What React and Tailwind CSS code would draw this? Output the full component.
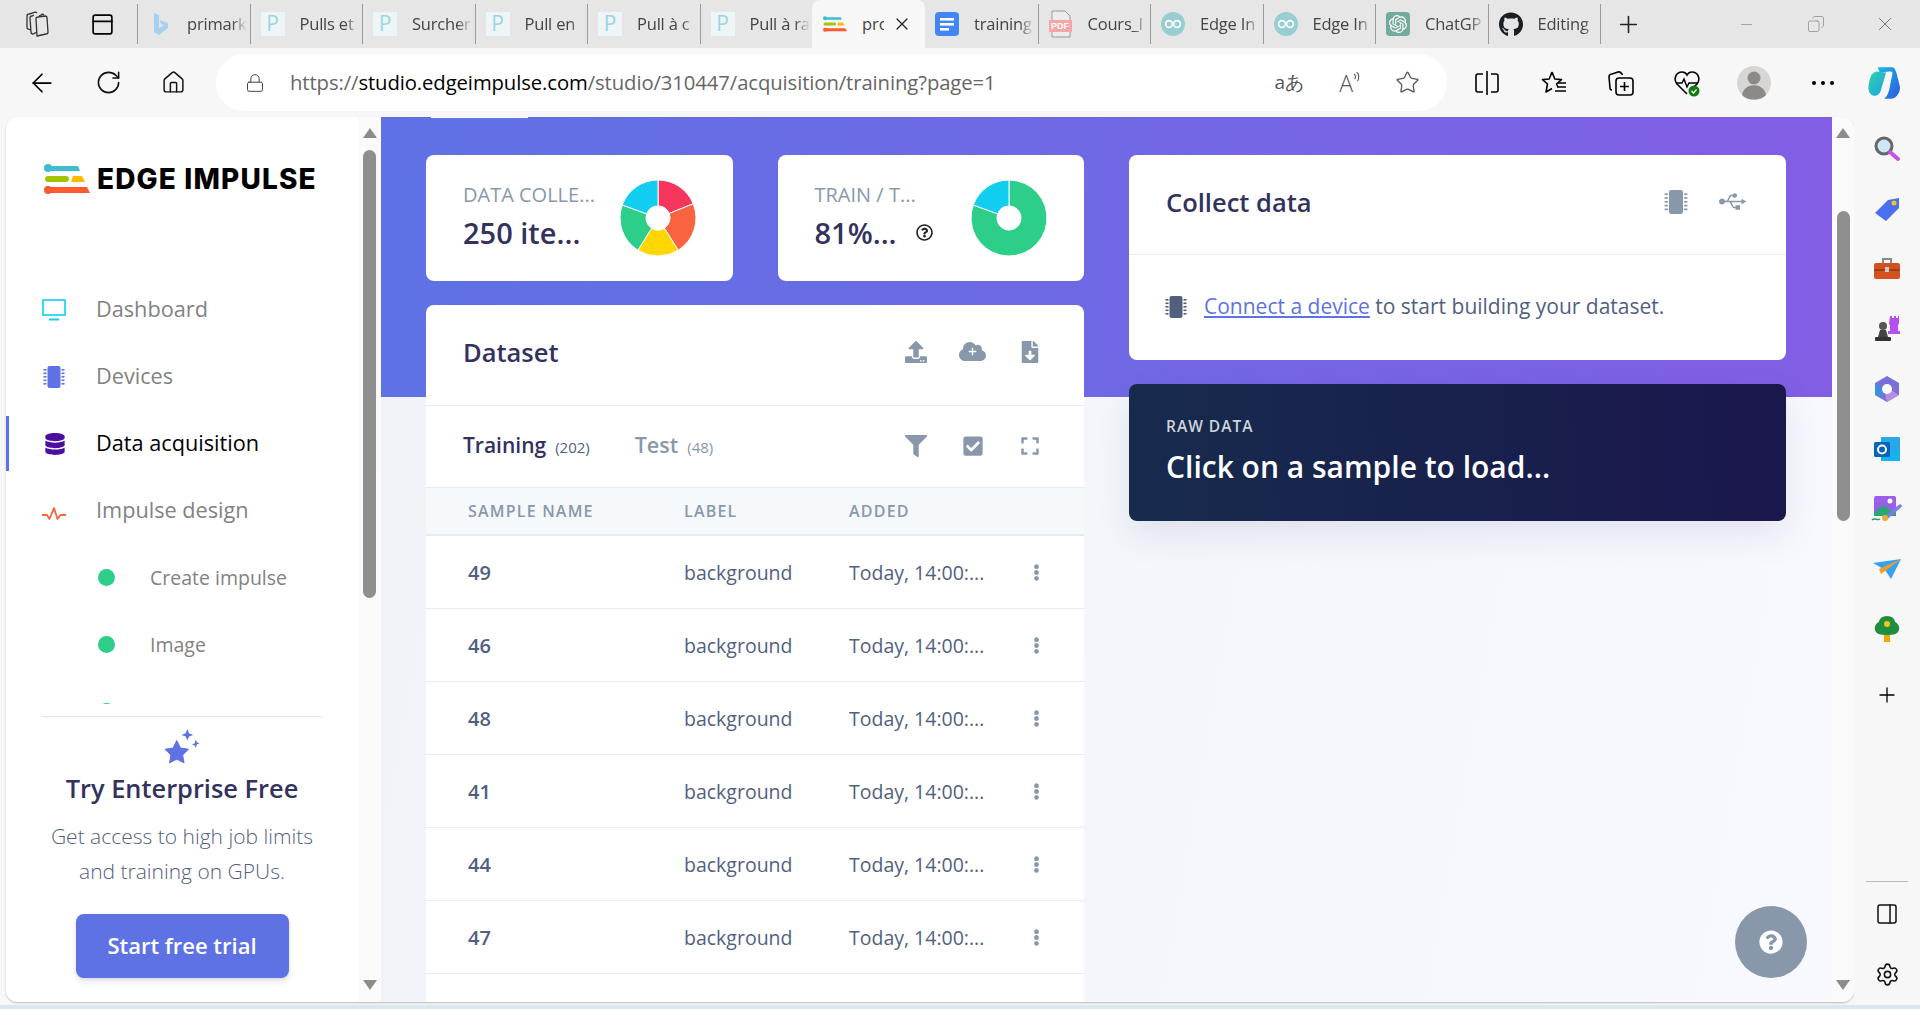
import React from "react";
import { ArrowLeft, RotateCw, Home, Lock, Star, Plus, X, Minus, Copy, PanelRight, Settings, PanelTop } from "lucide-react";
import {
  FaGithub, FaUpload, FaFileDownload, FaFilter, FaCheckSquare, FaExpand, FaUsb,
  FaEllipsisV, FaQuestionCircle, FaDatabase, FaRegQuestionCircle, FaCloud,
} from "react-icons/fa";
import { SiOpenai } from "react-icons/si";

const SANS = "font-['Open_Sans',sans-serif]";

const Logo = ({ className = "" }) => (
  <svg viewBox="0 0 46 30" className={className}>
    <circle cx="4" cy="4" r="4" fill="#3ebcd0" />
    <path d="M4 2h30l2 5H4z" fill="#3ebcd0" />
    <rect x="1" y="12" width="24" height="6" rx="3" fill="#a4c400" />
    <path d="M29 12h9l3 6H27z" fill="#ffb900" />
    <circle cx="4" cy="26" r="4" fill="#ff5a30" />
    <path d="M4 23h39l3 6H4z" fill="#ff5a30" />
  </svg>
);

const Chip = ({ className = "", body = "#5e72e4", pins = "#5e72e4" }) => (
  <svg viewBox="0 0 24 24" className={className}>
    <rect x="5.5" y="1" width="13" height="22" rx="2" fill={body} />
    {[4, 7.5, 11, 14.5, 18].map((y) => (
      <g key={y}>
        <rect x="1.5" y={y} width="3" height="1.6" fill={pins} />
        <rect x="19.5" y={y} width="3" height="1.6" fill={pins} />
      </g>
    ))}
  </svg>
);

const PFavicon = () => (
  <div className={`w-6 h-6 bg-[#eef5f6] flex items-center justify-center text-[21px] text-[#9bd5e0] ${SANS}`}>P</div>
);

const EdgeFavicon = () => (
  <svg viewBox="0 0 24 24" className="w-6 h-6">
    <circle cx="12" cy="12" r="12" fill="#98ced2" />
    <circle cx="8" cy="12" r="3.4" fill="none" stroke="#fff" strokeWidth="1.6" />
    <circle cx="16" cy="12" r="3.4" fill="none" stroke="#fff" strokeWidth="1.6" />
  </svg>
);

const BingIcon = () => (
  <svg viewBox="0 0 24 24" className="w-6 h-6">
    <path d="M6 1l5 2v13l5-3-3-1-1.5-4L20 11v5l-9 7-5-3z" fill="#a9d0f0" />
  </svg>
);

const DocsIcon = () => (
  <svg viewBox="0 0 24 24" className="w-6 h-6">
    <rect width="24" height="24" rx="4" fill="#4285f4" />
    <rect x="5" y="6" width="14" height="2.6" fill="#fff" />
    <rect x="5" y="11" width="14" height="2.6" fill="#fff" />
    <rect x="5" y="16" width="9" height="2.6" fill="#fff" />
  </svg>
);

const PdfIcon = () => (
  <div className="relative w-6 h-7">
    <svg viewBox="0 0 24 28" className="w-6 h-7">
      <path d="M3 1h13l5 5v21H3z" fill="#ececec" stroke="#999" />
    </svg>
    <span className="absolute left-0 bottom-[6px] w-[23px] bg-[#f5a5a5] text-white text-[9px] font-bold text-center leading-[12px] font-['Liberation_Sans',sans-serif]">PDF</span>
  </div>
);

const GptIcon = () => (
  <div className="w-6 h-6 rounded-sm bg-[#74aa9c] flex items-center justify-center text-white">
    <SiOpenai size={18} />
  </div>
);

const tabs = [
  { title: "primark", icon: <BingIcon /> },
  { title: "Pulls et", icon: <PFavicon /> },
  { title: "Surcher", icon: <PFavicon /> },
  { title: "Pull en", icon: <PFavicon /> },
  { title: "Pull à c", icon: <PFavicon /> },
  { title: "Pull à ra", icon: <PFavicon /> },
  { title: "pro", icon: <Logo className="w-6 h-[18px]" />, active: true },
  { title: "training", icon: <DocsIcon /> },
  { title: "Cours_I", icon: <PdfIcon /> },
  { title: "Edge In", icon: <EdgeFavicon /> },
  { title: "Edge In", icon: <EdgeFavicon /> },
  { title: "ChatGP", icon: <GptIcon /> },
  { title: "Editing", icon: <FaGithub size={25} className="text-[#1b1f23]" /> },
];

const TabBar = () => (
  <div className="h-12 bg-[#e6e6e6] flex items-center shrink-0">
    <div className="w-[137px] h-full flex items-center">
      <svg viewBox="0 0 26 28" className="ml-[25px] w-[26px] h-7" fill="none" stroke="#333" strokeWidth="1.3">
        <path d="M12 26l9-2c1 0 2-1 2-2l-1-14c0-1-1-2-2-2l-7 1c-1 0-2 1-2 2z" />
        <path d="M12 22L8 24c-1 0-2-1-2-2L5 8c0-1 1-2 2-2l2-1M14 6l2-1c1-1 2-1 3 0" />
        <path d="M6 20l-3-1c-1 0-1-1-1-2L2 6c0-1 1-2 2-2l4-1c1-1 3-1 4 0" />
      </svg>
      <PanelTop size={25} strokeWidth={1.6} className="ml-[39px] text-black" />
    </div>
    {tabs.map((tab, i) =>
      tab.active ? (
        <div key={i} className="w-[113px] h-full bg-[#f7f7f7] rounded-t-lg flex items-center pl-[11px]">
          <div className="w-6 shrink-0 flex justify-center">{tab.icon}</div>
          <span className={`ml-[15px] w-[22px] overflow-hidden whitespace-nowrap text-[16.5px] text-[#444] ${SANS}`}>{tab.title}</span>
          <X size={20} strokeWidth={1.5} className="ml-[8px] text-[#222]" />
        </div>
      ) : (
        <div
          key={i}
          className={`w-[112.5px] h-10 flex items-center pl-[10px] border-l border-[#9a9a9a] ${tabs[i - 1]?.active ? "border-l-0" : ""}`}
        >
          <div className="w-6 shrink-0 flex justify-center">{tab.icon}</div>
          <span className={`ml-[15px] w-[60px] overflow-hidden whitespace-nowrap text-[16.5px] tracking-[-0.2px] text-[#444] [mask-image:linear-gradient(90deg,#000_75%,transparent)] ${SANS}`}>{tab.title}</span>
        </div>
      )
    )}
    <div className="h-10 border-l border-[#9a9a9a]" />
    <Plus size={27} strokeWidth={1.4} className="ml-[14px] text-[#222]" />
    <Minus size={17} strokeWidth={1} className="ml-[96px] text-[#888]" />
    <Copy size={18} strokeWidth={1} className="ml-[52px] text-[#888] -scale-x-100" />
    <X size={22} strokeWidth={1} className="ml-[49px] text-[#666]" />
  </div>
);

const SplitIcon = () => (
  <svg viewBox="0 0 26 26" className="ml-[27px] w-[26px] h-[26px]" fill="none" stroke="#000" strokeWidth="1.6">
    <path d="M9 4H4c-1 0-2 1-2 2v14c0 1 1 2 2 2h5M17 4h5c1 0 2 1 2 2v14c0 1-1 2-2 2h-5M13 1v24" />
  </svg>
);

const FavoritesIcon = () => (
  <svg viewBox="0 0 28 28" className="ml-[40px] w-7 h-7" fill="none" stroke="#000" strokeWidth="1.6" strokeLinejoin="round">
    <path d="M12 3l2.800 7 6.700.6-5 4.400 1.500 3M12 3L9.200 10l-6.700.6 5 4.400L6 23l6-3.500" />
    <path d="M17 18h9M15 22h11M18 14h8" />
  </svg>
);

const CollectionsIcon = () => (
  <svg viewBox="0 0 28 28" className="ml-[39px] w-7 h-7" fill="none" stroke="#000" strokeWidth="1.6" strokeLinejoin="round">
    <rect x="9" y="9" width="17" height="17" rx="3" />
    <path d="M17.500 13v9M13 17.500h9" />
    <path d="M5 21c-1.500 0-2-1-2-2L2 8c0-2 1-3 3-3l6-2c2-.5 3 .5 4 2l.5 1" />
  </svg>
);

const HealthIcon = () => (
  <svg viewBox="0 0 28 28" className="ml-[38px] w-7 h-7" fill="none">
    <path d="M14 25L4 15C0 10 3 3 9 3c2 0 4 1 5 3 1-2 3-3 5-3 6 0 9 7 5 12l-3 3" stroke="#000" strokeWidth="1.6" />
    <path d="M3 14h6l2-4 3 8 2-4h8" stroke="#000" strokeWidth="1.5" />
    <circle cx="21" cy="22" r="5.500" fill="#107c10" />
    <path d="M18.500 22l2 2 3-3.500" stroke="#fff" strokeWidth="1.300" />
  </svg>
);

const ToolBar = () => (
  <div className="h-[69px] bg-[#f7f7f7] flex items-center shrink-0">
    <ArrowLeft size={30} strokeWidth={1.4} className="ml-[27px] text-black" />
    <RotateCw size={27} strokeWidth={1.4} className="ml-[38px] text-[#111]" />
    <Home size={25} strokeWidth={1.4} className="ml-[39px] text-[#111]" />
    <div className="ml-[30px] w-[1231px] h-[57px] bg-white rounded-full flex items-center">
      <Lock size={20} strokeWidth={1.2} className="ml-[29px] text-[#444]" />
      <div className={`ml-[25px] text-[20.3px] tracking-[-0.1px] text-[#666] ${SANS}`}>
        https://<span className="text-black">studio.edgeimpulse.com</span>/studio/310447/acquisition/training?page=1
      </div>
      <span className={`ml-auto text-[19px] text-[#555] ${SANS}`}>aあ</span>
      <span className={`ml-[35px] flex items-start text-[#555] text-[23px] leading-[30px] font-light ${SANS}`}>
        A
        <svg viewBox="0 0 10 16" className="w-[9px] h-[15px] mt-[2px]" fill="none" stroke="#555" strokeWidth="1.2">
          <path d="M1 4c2 1 2 4 1 6M4 2c3 2 3 7 1 10" />
        </svg>
      </span>
      <Star size={25} strokeWidth={1.2} className="ml-[33px] mr-[27px] text-[#555]" />
    </div>
    <SplitIcon />
    <FavoritesIcon />
    <CollectionsIcon />
    <HealthIcon />
    <svg viewBox="0 0 34 34" className="ml-[36px] w-[34px] h-[34px]">
      <circle cx="17" cy="17" r="17" fill="#d8d6d4" />
      <circle cx="17" cy="12" r="6.5" fill="#8d8986" />
      <path d="M5 29c2-13 22-13 24 0-5 6-19 6-24 0z" fill="#8d8986" />
    </svg>
    <div className="ml-[41px] w-[22px] flex justify-between">
      <span className="w-[4px] h-[4px] rounded-full bg-black" />
      <span className="w-[4px] h-[4px] rounded-full bg-black" />
      <span className="w-[4px] h-[4px] rounded-full bg-black" />
    </div>
    <svg viewBox="0 0 36 36" className="ml-[31px] w-[38px] h-[38px]">
      <defs>
        <linearGradient id="cop1" x1="0" y1="0" x2="1" y2="1">
          <stop offset="0" stopColor="#1fb6e8" />
          <stop offset="1" stopColor="#2a5be0" />
        </linearGradient>
        <linearGradient id="cop2" x1="0" y1="0" x2="1" y2="1">
          <stop offset="0" stopColor="#2fd4a8" />
          <stop offset="1" stopColor="#1fa0e8" />
        </linearGradient>
      </defs>
      <path d="M12 3h14c2 0 3 3 4 6l3 12c1 5-3 12-9 12h-6c3-2 4-5 5-9L26 9c0-2-1-2-3-2L14 8z" fill="url(#cop1)" />
      <path d="M4 17c1-6 3-9 7-10l9 1-5 17c-1 3-3 5-6 5-5 0-7-6-5-13z" fill="url(#cop2)" />
    </svg>
  </div>
);

const ScrollBar = ({ gap, thumb }) => (
  <div className="w-full h-full bg-[#fafafa] flex flex-col items-center pt-[11px]">
    <div className="w-0 h-0 border-x-[7.5px] border-x-transparent border-b-[10px] border-b-[#8c8c8c]" />
    <div className={`w-[13px] rounded-full bg-[#8f8f8f] ${gap} ${thumb}`} />
    <div className="mt-auto mb-[12px] w-0 h-0 border-x-[7.5px] border-x-transparent border-t-[10px] border-t-[#8c8c8c]" />
  </div>
);

const NavItem = ({ icon, label, active }) => (
  <div className="relative h-[67px] flex items-center">
    {active && <div className="absolute left-0 top-[6px] h-[55px] w-[3px] bg-[#5e72e4]" />}
    <div className="w-[91px] pl-[36px] flex">{icon}</div>
    <span className={`-ml-[1px] text-[21.7px] ${active ? "text-black" : "text-[#828282]"}`}>{label}</span>
  </div>
);

const SubItem = ({ label }) => (
  <div className="h-[67px] flex items-center pl-[92px]">
    <div className="w-[17px] h-[17px] rounded-full bg-[#2dce89]" />
    <span className="ml-[35px] text-[19.5px] text-[#828282]">{label}</span>
  </div>
);

const TvIcon = () => (
  <svg viewBox="0 0 24 24" className="w-6 h-6" fill="none" stroke="#11cdef" strokeWidth="1.6">
    <rect x="1" y="2" width="22" height="15" />
    <path d="M7 21.500h10" strokeWidth="2" />
  </svg>
);

const PulseIcon = () => (
  <svg viewBox="0 0 24 16" className="w-6 h-4 mt-[6px]" fill="none" stroke="#fb6340" strokeWidth="1.8" strokeLinejoin="round">
    <path d="M0 9h5l2.500 4L12 2l3.500 11 3-4H24" />
  </svg>
);

const Sidebar = () => (
  <aside className={`w-[352px] h-full bg-white flex flex-col ${SANS}`}>
    <div className="h-[158px] shrink-0 flex items-start pl-[38px] pt-[47px]">
      <Logo className="w-[46px] h-[30px]" />
      <span className="ml-[7px] -mt-[3px] text-[28px] leading-[36px] font-extrabold tracking-[1.15px] text-black font-['Inter',sans-serif]">EDGE IMPULSE</span>
    </div>
    <div className="h-[429px] shrink-0 overflow-hidden pt-[1px]">
      <NavItem label="Dashboard" icon={<TvIcon />} />
      <NavItem label="Devices" icon={<Chip className="w-6 h-6" />} />
      <NavItem label="Data acquisition" active icon={<FaDatabase size={22} className="text-[#4b0ea0] ml-[2px]" />} />
      <NavItem label="Impulse design" icon={<PulseIcon />} />
      <SubItem label="Create impulse" />
      <SubItem label="Image" />
      <SubItem label="Transfer learning" />
    </div>
    <div className="mx-[36px] mt-[12px] w-[280px] border-t border-[#e4e4e4] flex flex-col items-center">
      <svg viewBox="0 0 36 36" className="mt-[12px] w-[38px] h-[38px] -ml-[2px]" fill="#5e72e4">
        <path d="M14 11l3.400 7 7.600 1.100-5.500 5.300 1.300 7.600-6.800-3.600-6.800 3.600 1.300-7.600L3 19.100l7.600-1.100z" strokeLinejoin="round" stroke="#5e72e4" />
        <path d="M24 0l1.600 4 4 1.600-4 1.600L24 11l-1.600-3.800-4-1.600 4-1.600zM32 10l1 2.600 2.600 1-2.600 1L32 18l-1-2.400-2.600-1 2.600-1z" />
      </svg>
      <h3 className="mt-[3px] text-[25.4px] leading-[36px] font-semibold text-[#32325d] whitespace-nowrap">Try Enterprise Free</h3>
      <p className="mt-[13px] text-center text-[21px] leading-[35px] font-light text-[#525f7f] whitespace-nowrap">
        Get access to high job limits<br />and training on GPUs.
      </p>
      <button className="mt-[25px] w-[213px] h-[64px] pb-[2px] rounded-lg bg-[#5e72e4] text-white text-[22px] font-semibold shadow-[0_4px_6px_rgba(50,50,93,0.11),0_1px_3px_rgba(0,0,0,0.08)]">
        Start free trial
      </button>
    </div>
  </aside>
);

const polar = (r, deg) => {
  const a = ((deg - 90) * Math.PI) / 180;
  return [40 + r * Math.cos(a), 40 + r * Math.sin(a)];
};

const Pie = ({ slices }) => (
  <svg viewBox="0 0 80 80" className="w-20 h-20 shrink-0">
    {slices.map(([from, to, color]) => {
      const [x1, y1] = polar(38, from);
      const [x2, y2] = polar(38, to);
      const [x3, y3] = polar(12, to);
      const [x4, y4] = polar(12, from);
      const large = to - from > 180 ? 1 : 0;
      return (
        <path
          key={from}
          d={`M${x1} ${y1}A38 38 0 ${large} 1 ${x2} ${y2}L${x3} ${y3}A12 12 0 ${large} 0 ${x4} ${y4}Z`}
          fill={color}
          stroke="#fff"
          strokeWidth="1"
        />
      );
    })}
  </svg>
);

const StatCard = ({ label, value, slices, help }) => (
  <div className="h-[126px] bg-white rounded-lg flex items-center pl-[37px] pr-[35px]">
    <div className="flex-1 pb-[3px]">
      <div className="text-[20px] leading-[28px] text-[#8898aa] whitespace-nowrap">{label}</div>
      <div className="flex items-center mt-[4px]">
        <span className="text-[29px] leading-[40px] font-semibold text-[#32325d] whitespace-nowrap">{value}</span>
        {help && <FaRegQuestionCircle size={17} className="ml-[19px] text-[#222]" />}
      </div>
    </div>
    <Pie slices={slices} />
  </div>
);

const Card = ({ className = "", children }) => (
  <div className={`bg-white rounded-lg ${className}`}>{children}</div>
);

const rows = ["49", "46", "48", "41", "44", "47", "45"];

const SampleRow = ({ name }) => (
  <div className="h-[73px] shrink-0 flex items-center border-t border-[#e9ecef] first:border-t-0 text-[19.5px] text-[#525f7f]">
    <span className="w-[258px] pl-[42px] pt-[1px] text-[20px] font-semibold">{name}</span>
    <span className="w-[165px] pt-[1px]">background</span>
    <span className="w-[179px] pt-[1px] whitespace-nowrap">Today, 14:00:...</span>
    <FaEllipsisV size={17} className="text-[#8898aa]" />
  </div>
);

const IconGroup = ({ icons }) => (
  <div className="ml-auto flex items-center">
    {icons.map((icon, i) => (
      <div key={i} className="w-[57px] flex justify-center text-[#8898aa]">{icon}</div>
    ))}
  </div>
);

const Dataset = () => (
  <Card className="mt-[24px] flex-1 flex flex-col overflow-hidden rounded-b-none">
    <div className="h-[101px] shrink-0 flex items-center pl-[37px] pr-[26px] pb-[6px] border-b border-[#e9ecef]">
      <h3 className="text-[25.5px] font-semibold text-[#32325d]">Dataset</h3>
      <IconGroup
        icons={[
          <FaUpload size={22} key="u" />,
          <div key="c" className="relative -mt-[2px]">
            <FaCloud size={27} />
            <Plus size={11} strokeWidth={3} className="absolute left-[8px] top-[8px] text-white" />
          </div>,
          <FaFileDownload size={22} key="f" />,
        ]}
      />
    </div>
    <div className="h-[81px] shrink-0 flex items-center pl-[37px] pr-[26px] pb-[2px]">
      <span className="text-[21px] font-semibold text-[#32325d]">Training</span>
      <span className="ml-[9px] mt-[3px] text-[15px] text-[#525f7f]">(202)</span>
      <span className="ml-[45px] text-[21.5px] font-semibold text-[#8898aa]">Test</span>
      <span className="ml-[9px] mt-[3px] text-[15px] text-[#8898aa]">(48)</span>
      <IconGroup
        icons={[
          <FaFilter size={22} key="f" />,
          <FaCheckSquare size={22} key="c" />,
          <FaExpand size={20} key="e" />,
        ]}
      />
    </div>
    <div className="h-[48px] shrink-0 flex items-center bg-[#f6f9fc] border-y border-[#e9ecef] text-[16px] font-semibold tracking-[1.2px] text-[#8898aa]">
      <span className="w-[258px] pl-[42px]">SAMPLE NAME</span>
      <span className="w-[165px]">LABEL</span>
      <span>ADDED</span>
    </div>
    {rows.map((r) => <SampleRow key={r} name={r} />)}
  </Card>
);

const RightColumn = () => (
  <div className="flex flex-col">
    <Card className="h-[205px]">
      <div className="h-[100px] flex items-center pl-[37px] pr-[24px] border-b border-[#eeeff2]">
        <h3 className="text-[25.5px] font-semibold text-[#32325d] -mt-[4px]">Collect data</h3>
        <IconGroup
          icons={[
            <Chip key="c" className="w-[26px] h-7 -mt-[6px] -ml-[2px]" body="#8898aa" pins="#8898aa" />,
            <FaUsb key="u" size={27} className="-mt-[6px] -ml-[2px]" />,
          ]}
        />
      </div>
      <div className="h-[105px] flex items-center pl-[35px] pb-[2px]">
        <Chip className="w-6 h-6" body="#525f7f" pins="#525f7f" />
        <p className="ml-[16px] mt-[1px] text-[21px] text-[#525f7f]">
          <span className="text-[#5e72e4] underline underline-offset-2">Connect a device</span> to start building your dataset.
        </p>
      </div>
    </Card>
    <div className="mt-[24px] h-[137px] rounded-lg bg-[linear-gradient(87deg,#172b4d,#1a174d)] pl-[37px] pt-[30px] shadow-[0_15px_35px_rgba(50,50,93,0.1)]">
      <div className="text-[15.5px] leading-[24px] font-semibold tracking-[1px] text-[#ced4da]">RAW DATA</div>
      <div className="mt-[7px] text-[30px] leading-[44px] font-semibold text-white whitespace-nowrap">Click on a sample to load...</div>
    </div>
  </div>
);

const MainArea = () => (
  <main className={`relative flex-1 h-full overflow-hidden bg-[linear-gradient(100deg,#f1f3f9,#f8f9ff)] ${SANS}`}>
    <div className="absolute inset-x-0 top-0 h-[280px] bg-[linear-gradient(87deg,#5e72e4,#825ee4)]" />
    <div className="absolute left-[50px] top-0 w-[97px] h-[1px] bg-white" />
    <div className="relative h-full pl-[45px] pt-[38px] grid grid-cols-[658px_657px] gap-x-[45px]">
      <div className="flex flex-col min-h-0">
        <div className="grid grid-cols-2 gap-x-[45px] shrink-0">
          <StatCard
            label="DATA COLLE..."
            value="250 ite..."
            slices={[
              [0, 68, "#f5365c"],
              [68, 148, "#fb6340"],
              [148, 212, "#ffd600"],
              [212, 290, "#2dce89"],
              [290, 360, "#11cdef"],
            ]}
          />
          <StatCard
            label="TRAIN / T..."
            value="81%..."
            help
            slices={[
              [0, 290, "#2dce89"],
              [290, 360, "#11cdef"],
            ]}
          />
        </div>
        <Dataset />
      </div>
      <RightColumn />
    </div>
    <div className="absolute right-[25px] bottom-[24px] w-[72px] h-[72px] rounded-full bg-[#8898aa] flex items-center justify-center">
      <FaQuestionCircle size={24} className="text-white" />
    </div>
  </main>
);

const RailIcons = [
  <svg viewBox="0 0 28 28" className="w-7 h-7" key="search">
    <circle cx="11" cy="11" r="8" fill="#cfe6f5" stroke="#666" strokeWidth="3" />
    <path d="M17 17l8 7" stroke="#c652e0" strokeWidth="4" strokeLinecap="round" />
  </svg>,
  <svg viewBox="0 0 28 28" className="w-7 h-7" key="tag">
    <path d="M2 18L15 5l11-2v10L13 26z" fill="#4a6ff0" />
    <circle cx="21" cy="8" r="2.500" fill="#f5c518" />
  </svg>,
  <svg viewBox="0 0 28 28" className="w-7 h-7" key="tools">
    <path d="M10 8V4h8v4" fill="none" stroke="#888" strokeWidth="2" />
    <rect x="1" y="8" width="26" height="16" rx="2" fill="#d2521f" />
    <rect x="1" y="14" width="26" height="2" fill="#a33d12" />
    <rect x="12" y="12" width="4" height="5" fill="#ccc" />
  </svg>,
  <svg viewBox="0 0 28 28" className="w-7 h-7" key="chess">
    <path d="M18 1h2v2h2V1h2v2h2V1h1v8l-1 1v6h2v3H16v-3h2v-6l-1-1z" fill="#b54ff0" transform="translate(-1 0)" />
    <circle cx="10" cy="11" r="4" fill="#555" />
    <path d="M7 15h6l2 7H5z" fill="#444" />
    <rect x="2" y="22" width="16" height="4" rx="1" fill="#333" />
  </svg>,
  <svg viewBox="0 0 28 28" className="w-7 h-7" key="m365">
    <path d="M14 1l12 7v12l-12 7-12-7V8z" fill="#7a6fd8" />
    <path d="M2 8l8 6v8l-8-2z" fill="#3f8fdc" />
    <path d="M14 27l12-7-8-5-6 4z" fill="#b88de0" />
    <circle cx="14" cy="14" r="5" fill="#fff" />
  </svg>,
  <svg viewBox="0 0 28 28" className="w-7 h-7" key="outlook">
    <rect x="8" y="2" width="19" height="24" rx="1" fill="#28a8ea" />
    <path d="M8 14l10 6 9-6v12H8z" fill="#14b4f0" />
    <rect x="1" y="7" width="16" height="15" rx="1.500" fill="#0364b8" />
    <circle cx="9" cy="14.500" r="4" fill="none" stroke="#fff" strokeWidth="2" />
  </svg>,
  <svg viewBox="0 0 32 28" className="w-8 h-7" key="image">
    <rect x="3" y="1" width="22" height="20" rx="2" fill="#9a5fe8" />
    <path d="M3 18l9-8 13 9v2H3z" fill="#2aa873" />
    <circle cx="19" cy="6" r="2.500" fill="#fff" />
    <path d="M14 24L29 11" stroke="#7a7fe8" strokeWidth="3.500" strokeLinecap="round" />
    <circle cx="14" cy="23" r="3" fill="#e8b030" />
    <path d="M1 25c3-3 5 1 8-1" fill="none" stroke="#2a9a60" strokeWidth="1.500" />
  </svg>,
  <svg viewBox="0 0 30 28" className="w-[30px] h-7" key="send">
    <path d="M1 8l28-4-10 20-6-9z" fill="#3aa0f0" />
    <path d="M29 4L7 14l2 5z" fill="#f0a020" />
  </svg>,
  <svg viewBox="0 0 28 28" className="w-7 h-7" key="tree">
    <path d="M11 18h6v9h-6z" fill="#f0a800" />
    <path d="M14 1c6 0 8 4 8 6 3 1 5 5 4 8-1 4-5 5-12 5S3 19 2 15c-1-3 1-7 4-8 0-2 2-6 8-6z" fill="#1f8f3f" />
    <circle cx="14" cy="9" r="3" fill="#f5c518" />
  </svg>,
];

const SideRail = () => (
  <div className="w-[66px] h-full pb-[3px] bg-[#f7f7f7] flex flex-col items-center">
    <div className="pt-[2px] w-full">
      {RailIcons.map((icon) => (
        <div key={icon.key} className="h-[60px] flex items-center justify-center">{icon}</div>
      ))}
      <div className="mt-[6px] h-[60px] flex items-center justify-center">
        <Plus size={24} strokeWidth={1.3} className="text-black" />
      </div>
    </div>
    <div className="mt-auto w-[42px] border-t border-[#bbb]" />
    <div className="h-[60px] flex items-center justify-center mt-[2px]">
      <PanelRight size={24} strokeWidth={1.5} className="text-[#111]" />
    </div>
    <div className="h-[60px] flex items-center justify-center mb-[-2px]">
      <Settings size={25} strokeWidth={1.5} className="text-[#111]" />
    </div>
  </div>
);

export default function App() {
  return (
    <div className="w-[1920px] h-[1009px] overflow-hidden bg-[#f7f7f7] flex flex-col">
      <TabBar />
      <ToolBar />
      <div className="flex-1 min-h-0 flex">
        <div className="w-[6px] shrink-0" />
        <div className="flex-1 min-w-0 h-[885px] flex rounded-xl overflow-hidden shadow-[0_1px_2px_rgba(0,0,0,0.25)]">
          <Sidebar />
          <div className="w-[23px] h-full shrink-0">
            <ScrollBar gap="mt-[12px]" thumb="h-[448px]" />
          </div>
          <MainArea />
          <div className="w-[22px] h-full shrink-0">
            <ScrollBar gap="mt-[73px]" thumb="h-[310px]" />
          </div>
        </div>
        <SideRail />
      </div>
      <div className="h-[4px] shrink-0 bg-[#d8e8ee]" />
    </div>
  );
}
